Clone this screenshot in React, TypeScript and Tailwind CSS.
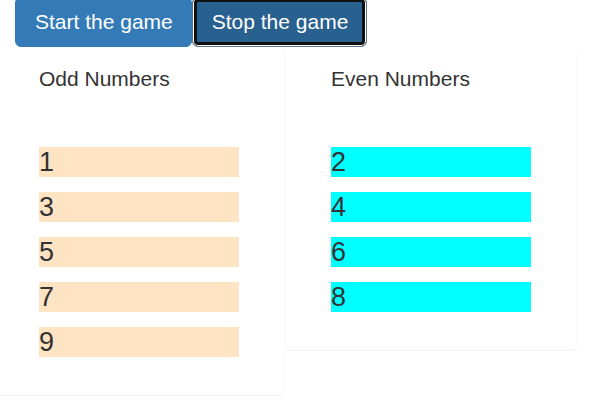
const columns = [
  { title: "Odd Numbers", numbers: [1, 3, 5, 7, 9], fill: "bg-[#ffe4c4]" },
  { title: "Even Numbers", numbers: [2, 4, 6, 8], fill: "bg-[#00ffff]" },
];

export default function App() {
  return (
    <main className="overflow-hidden bg-white pb-1 font-['Liberation_Sans',Arial,sans-serif] text-[#333333]">
      <div className="-mt-[3px] flex pl-[15px] text-[21px] leading-[30px] text-white">
        <button
          type="button"
          className="rounded-md border border-[#337ab7] bg-[#337ab7] py-[9px] pr-[18px] pl-[19px] whitespace-nowrap"
        >
          Start the game
        </button>
        <button
          type="button"
          className="rounded-md border border-[#62748a] bg-[#286090] py-[9px] pr-[18px] pl-[19px] whitespace-nowrap shadow-[inset_0_0_0_1px_#ffffff,inset_0_0_0_4px_#101010]"
        >
          Stop the game
        </button>
      </div>

      <div className="-ml-[7px] mr-5 grid grid-cols-2 items-start">
        {columns.map((column) => (
          <section
            key={column.title}
            className="rounded-md border-x border-b border-x-[#fafafa] border-b-[#f2f2f2] px-[45px] pt-[17px] pb-[38px]"
          >
            <h2 className="text-[21px] leading-[30px]">{column.title}</h2>
            <ul className="mt-[53px] flex flex-col gap-[15px] text-[27px] leading-[30px]">
              {column.numbers.map((number) => (
                <li key={number} className={column.fill}>
                  {number}
                </li>
              ))}
            </ul>
          </section>
        ))}
      </div>
    </main>
  );
}
